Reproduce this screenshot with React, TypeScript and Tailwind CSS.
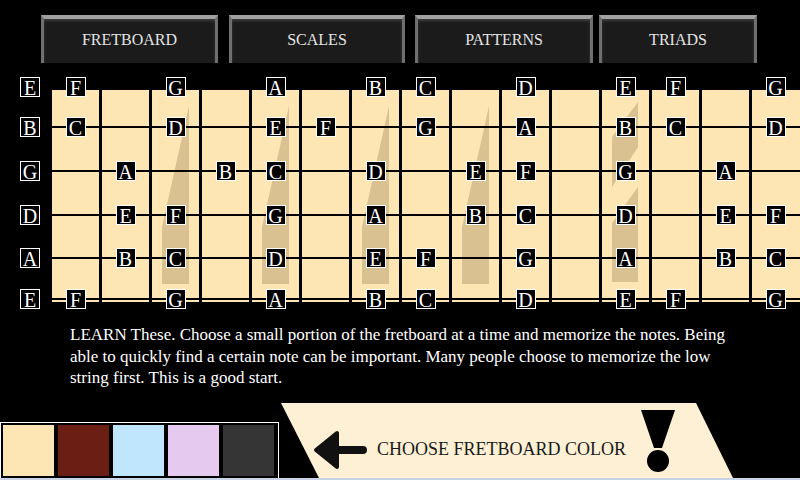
import React from 'react'

type Note = [number, string]

interface GuitarString {
  open: string
  y: number // centre, relative to the diagram
  line: number // thickness on the board, 0 = not drawn
  notes: Note[]
}

const OUTER_E: Note[] = [[1, 'F'], [3, 'G'], [5, 'A'], [7, 'B'], [8, 'C'], [10, 'D'], [12, 'E'], [13, 'F'], [15, 'G']]

const STRINGS: GuitarString[] = [
  { open: 'E', y: 17, line: 0, notes: OUTER_E },
  { open: 'B', y: 57, line: 1.5, notes: [[1, 'C'], [3, 'D'], [5, 'E'], [6, 'F'], [8, 'G'], [10, 'A'], [12, 'B'], [13, 'C'], [15, 'D']] },
  { open: 'G', y: 101, line: 1.5, notes: [[2, 'A'], [4, 'B'], [5, 'C'], [7, 'D'], [9, 'E'], [10, 'F'], [12, 'G'], [14, 'A']] },
  { open: 'D', y: 145, line: 2, notes: [[2, 'E'], [3, 'F'], [5, 'G'], [7, 'A'], [9, 'B'], [10, 'C'], [12, 'D'], [14, 'E'], [15, 'F']] },
  { open: 'A', y: 188, line: 2, notes: [[2, 'B'], [3, 'C'], [5, 'D'], [7, 'E'], [8, 'F'], [10, 'G'], [12, 'A'], [14, 'B'], [15, 'C']] },
  { open: 'E', y: 229, line: 2.5, notes: OUTER_E },
]

const TABS = [
  { label: 'FRETBOARD', cls: 'w-[177px]' },
  { label: 'SCALES', cls: 'w-[176px] ml-[11px]' },
  { label: 'PATTERNS', cls: 'w-[178px] ml-[10px]' },
  { label: 'TRIADS', cls: 'w-[158px] ml-[6px]' },
]

const SWATCHES = ['bg-[#fee5b4]', 'bg-[#6b1f14]', 'bg-[#c0e6fe]', 'bg-[#e6c9ef]', 'bg-[#353535]']

const BOARD_TOP = 20
const SERIF = '"Liberation Serif", "Times New Roman", serif'

function Label({ note }: { note: string }) {
  return (
    <div className="flex h-[20px] w-[20px] items-center justify-center border border-white bg-black">
      <span className="translate-y-[1px] text-[20px] leading-none text-white" style={{ fontFamily: 'Liberation Serif' }}>
        {note}
      </span>
    </div>
  )
}

// Shark-fin inlay, drawn inside a fret space
function Inlay({ double }: { double?: boolean }) {
  return (
    <svg className="absolute inset-0" width="47" height="212" viewBox="0 0 47 212">
      {double ? (
        <>
          <polygon points="36,12 36,57 10,97 10,47" fill="#d9c191" />
          <polygon points="36,97 36,192 10,192 10,133" fill="#d9c191" />
        </>
      ) : (
        <polygon points="37,16 37,194 10,194 10,137" fill="#d9c191" />
      )}
    </svg>
  )
}

function Fretboard() {
  const cols = Array.from({ length: 15 }, (_, i) => i + 1)
  return (
    <div className="relative mt-[7px] h-[240px] w-[800px]">
      {/* board */}
      <div className="absolute left-[52px] top-[20px] flex h-[212px] w-[748px] bg-[#fee5b4]">
        {cols.map((c) => (
          <div
            key={c}
            className={`relative h-full ${c === 1 ? 'w-[47px]' : 'w-[50px] border-l-[3px] border-black'}`}
          >
            {[3, 5, 7, 9].includes(c) && <Inlay />}
            {c === 12 && <Inlay double />}
          </div>
        ))}
        {STRINGS.filter((s) => s.line > 0).map((s, i) => (
          <div
            key={i}
            className="absolute left-0 right-0 bg-black"
            style={{ top: s.y - BOARD_TOP - s.line / 2, height: s.line }}
          />
        ))}
      </div>

      {/* open strings */}
      {STRINGS.map((s, i) => (
        <div key={`o${i}`} className="absolute left-[20px]" style={{ top: s.y - 10 }}>
          <Label note={s.open} />
        </div>
      ))}

      {/* notes */}
      {STRINGS.map((s, i) =>
        s.notes.map(([col, n]) => (
          <div
            key={`${i}-${col}`}
            className="absolute"
            style={{ left: 75.5 + 50 * (col - 1) - 10, top: s.y - 10 }}
          >
            <Label note={n} />
          </div>
        )),
      )}
    </div>
  )
}

export default function App() {
  return (
    <div className="relative flex h-[480px] w-[800px] flex-col overflow-hidden bg-black">
      {/* tabs */}
      <div className="flex pl-[41px] pt-[15px]">
        {TABS.map((t) => (
          <button
            key={t.label}
            className={`${t.cls} flex h-[48px] items-center justify-center border-x-[3px] border-t-[4px] border-x-[#6f6f6f] border-t-[#a0a0a0] bg-[#1b1b1b] pb-[2px] shadow-[inset_0_2px_3px_rgba(255,255,255,0.15)]`}
          >
            <span className="text-[16px] text-[#e4e4e4]" style={{ fontFamily: 'Times New Roman' }}>
              {t.label}
            </span>
          </button>
        ))}
      </div>

      <Fretboard />

      <p className="mt-[14px] w-[750px] pl-[70px] font-['Times_New_Roman'] text-[17px] leading-[21.5px] text-white">
        LEARN These. Choose a small portion of the fretboard at a time and memorize the notes. Being able to quickly
        find a certain note can be important. Many people choose to memorize the low string first. This is a good
        start.
      </p>

      {/* colour picker */}
      <div className="mt-auto flex h-[75px] items-end">
        <div className="flex h-[56px] gap-[4px] border border-b-0 border-white px-[2px] pt-[2px] pr-[4px]">
          {SWATCHES.map((s) => (
            <div key={s} className={`h-[51px] w-[51px] ${s}`} />
          ))}
        </div>
        <div className="ml-[2px] flex h-[75px] w-[452px] items-start bg-[#fef0d5] [clip-path:polygon(0_0,415px_0,452px_100%,38px_100%)]">
          <svg className="ml-[31px] mt-[26px]" width="56" height="42" viewBox="0 0 56 42">
            <polygon points="4,21 25,4 25,38" fill="#111" stroke="#111" strokeWidth="4" strokeLinejoin="round" />
            <line x1="24" y1="21" x2="51" y2="21" stroke="#111" strokeWidth="8" strokeLinecap="round" />
          </svg>
          <span className="ml-[9px] mt-[35px] text-[18px] leading-[22px] text-[#1a1a1a]" style={{ fontFamily: SERIF }}>
            CHOOSE FRETBOARD COLOR
          </span>
          <svg className="ml-[15px] mt-[7px]" width="34" height="62" viewBox="0 0 34 62">
            <polygon points="0,0 34,0 21,38 13,38" fill="#000" />
            <circle cx="17" cy="51" r="11" fill="#000" />
          </svg>
        </div>
      </div>
      <div className="h-[2px] bg-[#c8d4e6]" />
    </div>
  )
}
